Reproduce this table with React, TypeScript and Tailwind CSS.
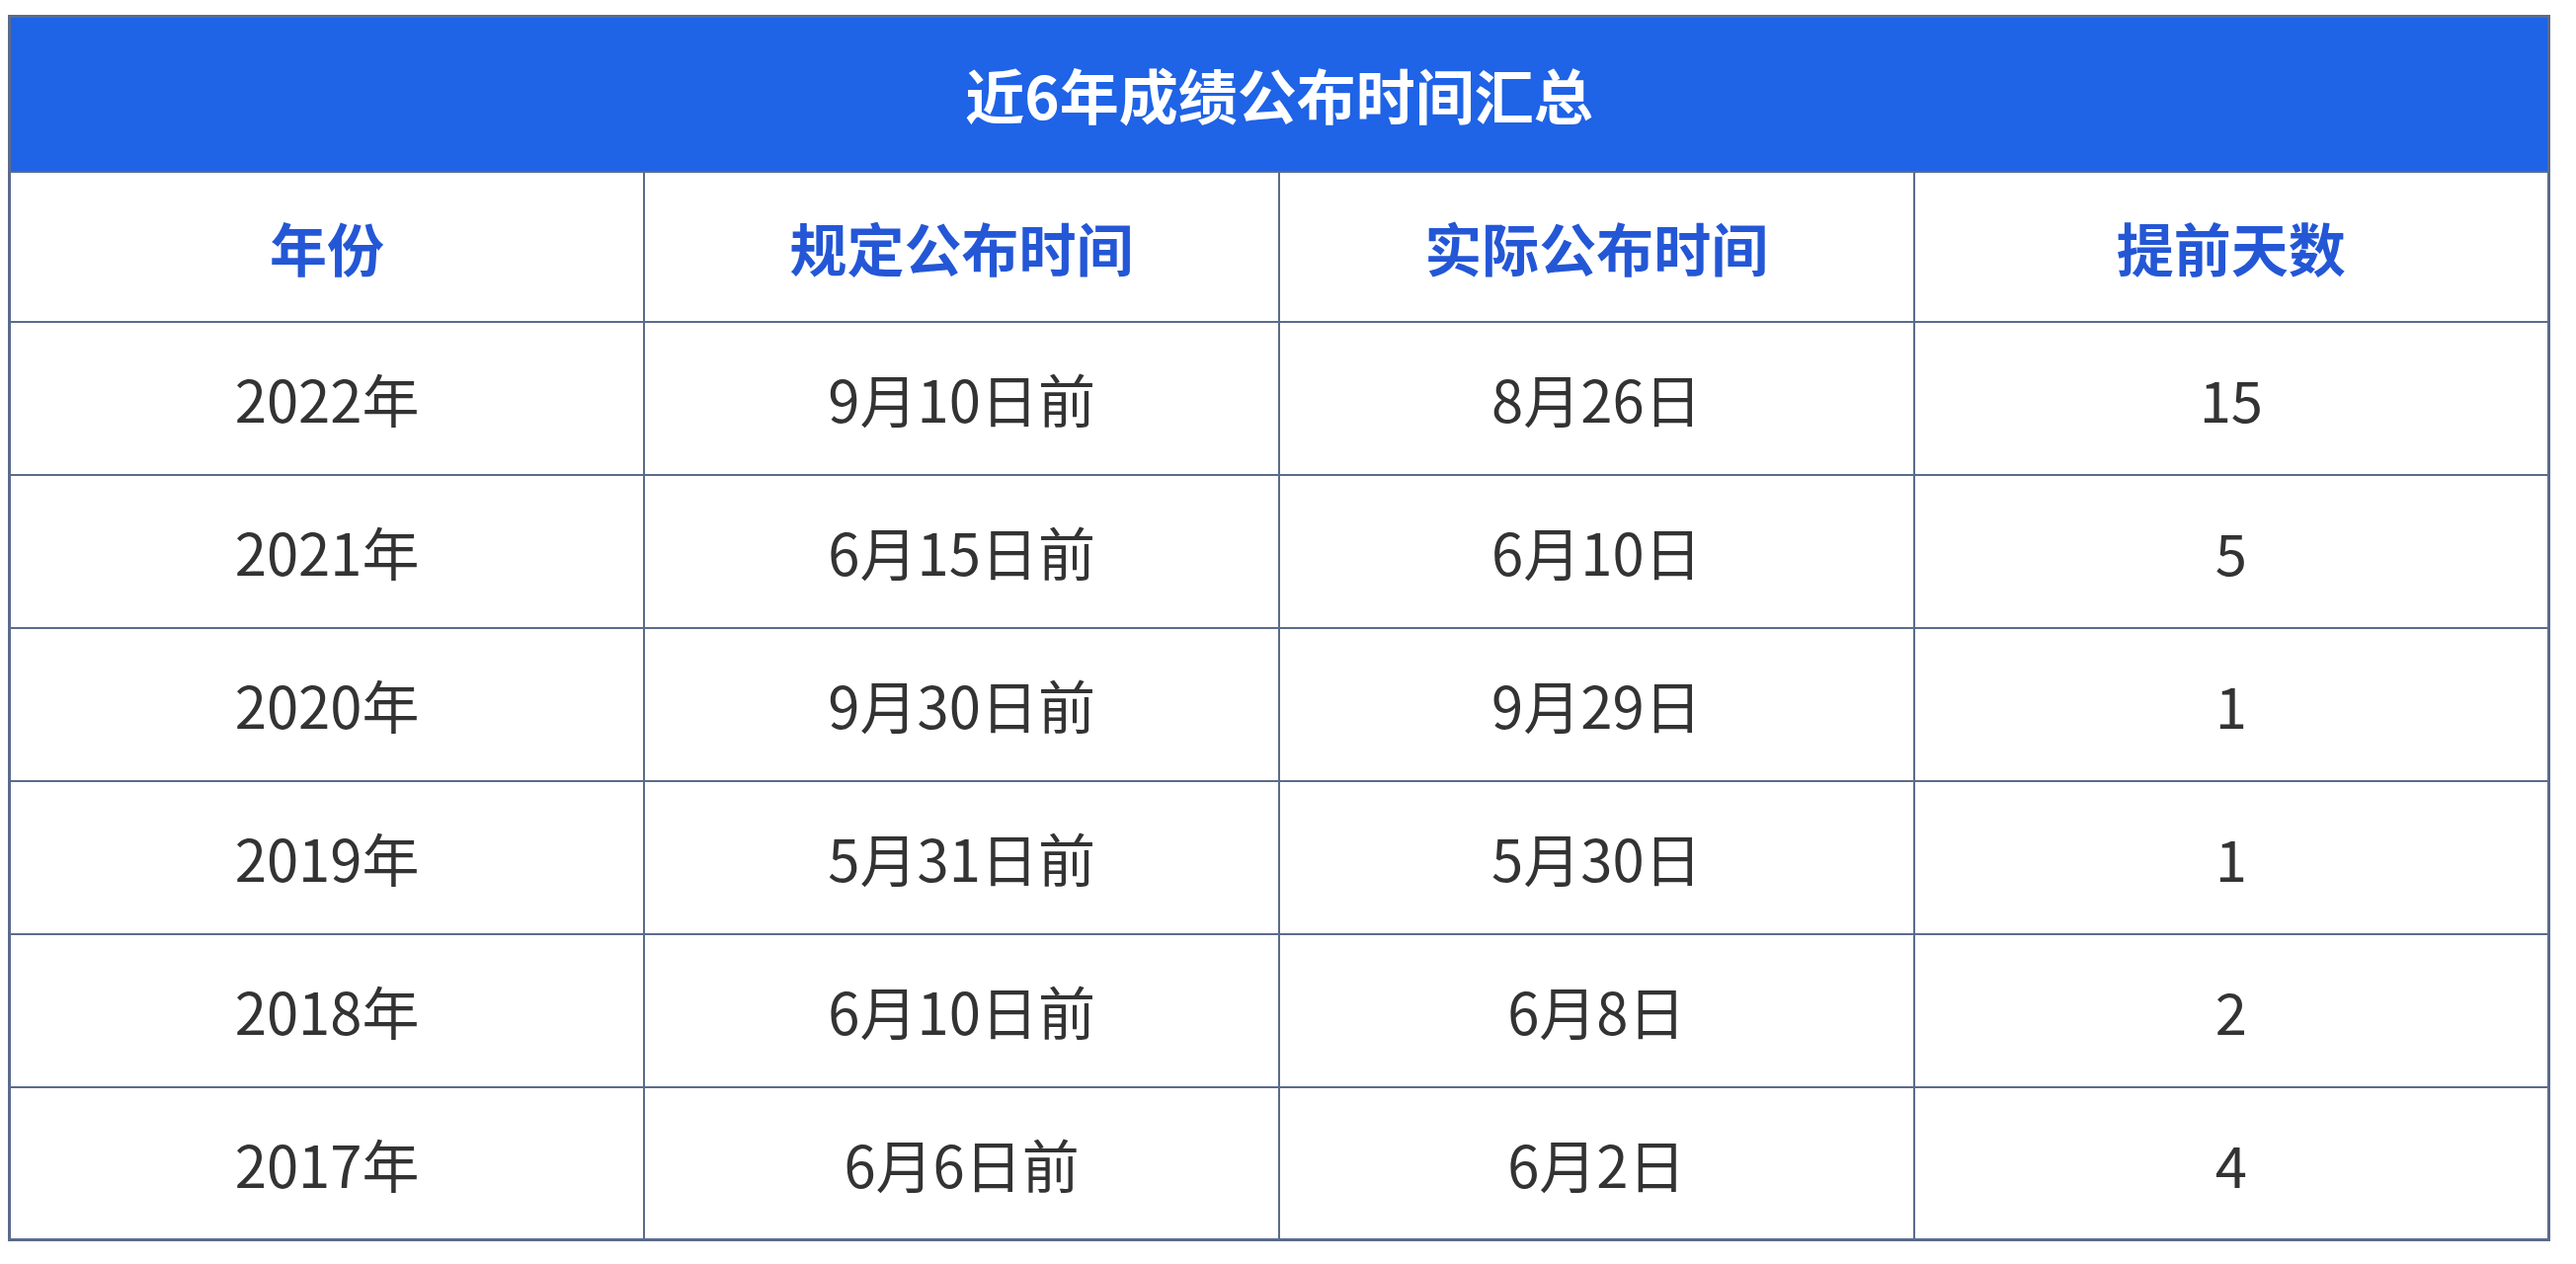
const rows = [
  ["2022年", "9月10日前", "8月26日", "15"],
  ["2021年", "6月15日前", "6月10日", "5"],
  ["2020年", "9月30日前", "9月29日", "1"],
  ["2019年", "5月31日前", "5月30日", "1"],
  ["2018年", "6月10日前", "6月8日", "2"],
  ["2017年", "6月6日前", "6月2日", "4"],
];

const heads = ["年份", "规定公布时间", "实际公布时间", "提前天数"];

export default function App() {
  return (
    <div
      className="w-[2608px] h-[1280px] bg-white pl-[8px] pt-[15px]"
      style={{ fontFamily: '"Noto Sans CJK SC", "Noto Sans", sans-serif' }}
    >
      <table className="w-[2574px] table-fixed border-collapse border-[3px] border-[#5b6b8a]">
        <thead>
          <tr className="h-[157px] bg-[#1f63e6]">
            <th
              colSpan={4}
              className="text-center text-[60px] font-bold text-white leading-none"
            >
              近6年成绩公布时间汇总
            </th>
          </tr>
          <tr className="h-[152px]">
            {heads.map((h) => (
              <th
                key={h}
                className="border-2 border-[#5b6b8a] text-center text-[58px] font-bold text-[#2457d6] leading-none"
              >
                {h}
              </th>
            ))}
          </tr>
        </thead>
        <tbody>
          {rows.map((r, i) => (
            <tr key={i} className="h-[155px]">
              {r.map((c, j) => (
                <td
                  key={j}
                  className="border-2 border-[#5b6b8a] text-center text-[58px] text-[#333333] leading-none"
                >
                  {c}
                </td>
              ))}
            </tr>
          ))}
        </tbody>
      </table>
    </div>
  );
}
